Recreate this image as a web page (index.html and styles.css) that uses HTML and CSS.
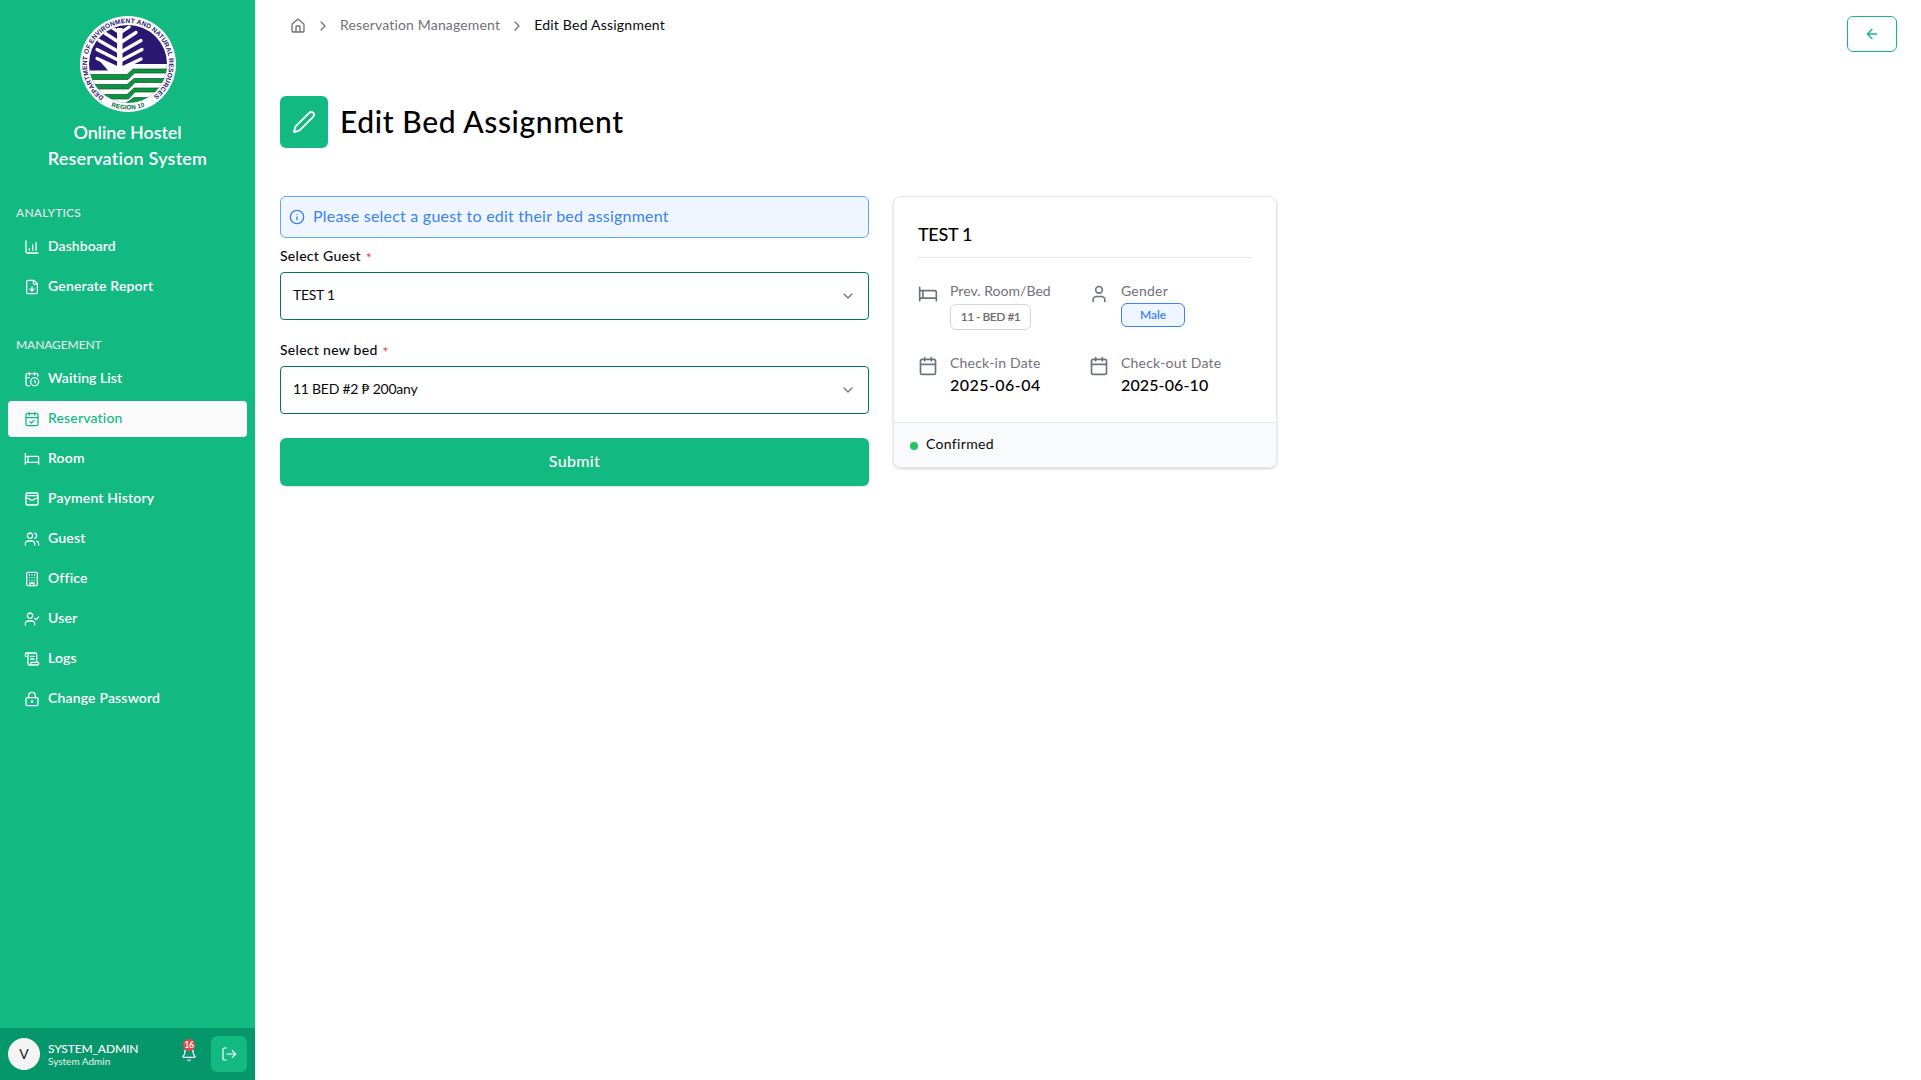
FILE: index.html
```html
<!DOCTYPE html>
<html lang="en">
<head>
<meta charset="utf-8">
<title>Edit Bed Assignment</title>
<link rel="stylesheet" href="styles.css">
</head>
<body>
<svg class="sprite" width="0" height="0" aria-hidden="true">
  <symbol id="bed" viewBox="0 0 24 24"><path d="M2 4v16M2 8h18a2 2 0 0 1 2 2v10M2 17h20M6 8v9"/></symbol>
  <symbol id="calendar" viewBox="0 0 24 24"><path d="M8 2v4M16 2v4M3 10h18"/><rect x="3" y="4" width="18" height="18" rx="2"/></symbol>
  <symbol id="chev-right" viewBox="0 0 24 24"><path d="m9 18 6-6-6-6"/></symbol>
  <symbol id="chev-down" viewBox="0 0 24 24"><path d="m6 9 6 6 6-6"/></symbol>
</svg>
<div class="app">
  <aside class="sidebar">
    <div class="brand">
      <svg class="logo" viewBox="0 0 96 96">
        <defs>
          <clipPath id="disc"><circle cx="48" cy="48" r="39"/></clipPath>
          <path id="arc-top" d="M23.900 81.200A41 41 0 1 1 72.100 81.200"/>
          <path id="arc-bottom" d="M22 85.300A45.500 45.500 0 0 0 74 85.300"/>
        </defs>
        <circle cx="48" cy="48" r="48" fill="#fff"/>
        <g clip-path="url(#disc)">
          <rect width="96" height="96" fill="#2a1772"/>
          <path d="M0 54.500H28L18 43Q30 48 37 52V12h5.500V52Q50 46 60.500 44L54 48H96V96H0Z" fill="#fff"/>
          <g fill="none" stroke="#fff" stroke-width="3.300">
            <path d="M24 16.500 40 27 56 16.500M19 24.500 40 36.500 61 24.500M17 33.500 40 45 62 33.500M17 42.500 40 53 61 43"/>
            <path d="M31 11 40 17 49 11"/>
          </g>
          <g fill="#05963f" stroke="#1d4a33" stroke-width=".7">
            <path d="M0 58.500H47L53 53H96V57H54.500L48 63.500H0Z"/>
            <path d="M0 68.500H47L54 62.500H96V66.500H55L48.500 73H0Z"/>
            <path d="M0 78.500H47L54 72H96V76H55L48.500 83H0Z"/>
            <path d="M44 88.500 54 81.500H96V96H44Z"/>
          </g>
        </g>
        <text class="seal-text"><textPath href="#arc-top" textLength="204" lengthAdjust="spacing">DEPARTMENT OF ENVIRONMENT AND NATURAL RESOURCES</textPath></text>
        <text class="seal-text seal-region"><textPath href="#arc-bottom" startOffset="50%" text-anchor="middle">REGION 10</textPath></text>
      </svg>
      <div class="brand-name"><span class="l1">Online Hostel</span><br>Reservation System</div>
    </div>
    <nav>
      <h2>ANALYTICS</h2>
      <a class="even"><svg viewBox="0 0 24 24"><path d="M13 17V9M18 17V5M3 3v16a2 2 0 0 0 2 2h16M8 17v-3"/></svg><span>Dashboard</span></a>
      <a><svg viewBox="0 0 24 24"><path d="M15 2H6a2 2 0 0 0-2 2v16a2 2 0 0 0 2 2h12a2 2 0 0 0 2-2V7ZM14 2v4a2 2 0 0 0 2 2h4M12 18v-6M9 15l3 3 3-3"/></svg><span>Generate Report</span></a>
      <h2 class="second">MANAGEMENT</h2>
      <a class="even"><svg viewBox="0 0 24 24"><path d="M21 7.500V6a2 2 0 0 0-2-2H5a2 2 0 0 0-2 2v14a2 2 0 0 0 2 2h3.500M16 2v4M8 2v4M3 10h5M17.500 17.500 16 16.300V14"/><circle cx="16" cy="16" r="6"/></svg><span>Waiting List</span></a>
      <a class="active"><svg viewBox="0 0 24 24"><path d="M8 2v4M16 2v4M3 10h18M9 16l2 2 4-4"/><rect x="3" y="4" width="18" height="18" rx="2"/></svg><span>Reservation</span></a>
      <a><svg><use href="#bed"/></svg><span>Room</span></a>
      <a><svg viewBox="0 0 24 24"><rect x="3" y="3" width="18" height="18" rx="2"/><path d="M3 9a2 2 0 0 1 2-2h14a2 2 0 0 1 2 2M3 11h3c.8 0 1.600.3 2.100.9l1.100.9c1.600 1.600 4.100 1.600 5.700 0l1.100-.9c.5-.5 1.300-.9 2.100-.9H21"/></svg><span>Payment History</span></a>
      <a><svg viewBox="0 0 24 24"><path d="M16 21v-2a4 4 0 0 0-4-4H6a4 4 0 0 0-4 4v2M22 21v-2a4 4 0 0 0-3-3.870M16 3.130a4 4 0 0 1 0 7.750"/><circle cx="9" cy="7" r="4"/></svg><span>Guest</span></a>
      <a><svg viewBox="0 0 24 24"><rect x="4" y="2" width="16" height="20" rx="2"/><path d="M9 22v-4h6v4M8 6h.01M16 6h.01M12 6h.01M12 10h.01M12 14h.01M16 10h.01M16 14h.01M8 10h.01M8 14h.01"/></svg><span>Office</span></a>
      <a><svg viewBox="0 0 24 24"><path d="m16 11 2 2 4-4M16 21v-2a4 4 0 0 0-4-4H6a4 4 0 0 0-4 4v2"/><circle cx="9" cy="7" r="4"/></svg><span>User</span></a>
      <a><svg viewBox="0 0 24 24"><path d="M15 12h-5M15 8h-5M19 17V5a2 2 0 0 0-2-2H4M8 21h12a2 2 0 0 0 2-2v-1a1 1 0 0 0-1-1H11a1 1 0 0 0-1 1v1a2 2 0 1 1-4 0V5a2 2 0 1 0-4 0v2a1 1 0 0 0 1 1h3"/></svg><span>Logs</span></a>
      <a><svg viewBox="0 0 24 24"><circle cx="12" cy="16" r="1"/><rect x="3" y="10" width="18" height="12" rx="2"/><path d="M7 10V7a5 5 0 0 1 10 0v3"/></svg><span>Change Password</span></a>
    </nav>
    <footer class="account">
      <div class="avatar">V</div>
      <div class="who"><div class="user">SYSTEM_ADMIN</div><div class="role">System Admin</div></div>
      <div class="bell">
        <svg viewBox="0 0 24 24"><path d="M10.268 21a2 2 0 0 0 3.464 0M3.262 15.326A1 1 0 0 0 4 17h16a1 1 0 0 0 .740-1.673C19.410 13.956 18 12.499 18 8A6 6 0 0 0 6 8c0 4.499-1.411 5.956-2.738 7.326"/></svg>
        <span class="count">16</span>
      </div>
      <button class="logout"><svg viewBox="0 0 24 24"><path d="M8 21H5a2 2 0 0 1-2-2V5a2 2 0 0 1 2-2h3M17 17l5-5-5-5M22 12H9"/></svg></button>
    </footer>
  </aside>
  <main>
    <div class="topbar">
      <div class="crumbs">
        <svg class="home" viewBox="0 0 24 24"><path d="M15 21v-8a1 1 0 0 0-1-1h-4a1 1 0 0 0-1 1v8M3 10a2 2 0 0 1 .709-1.528l7-5.999a2 2 0 0 1 2.582 0l7 5.999A2 2 0 0 1 21 10v9a2 2 0 0 1-2 2H5a2 2 0 0 1-2-2z"/></svg>
        <svg class="sep"><use href="#chev-right"/></svg>
        <span>Reservation Management</span>
        <svg class="sep"><use href="#chev-right"/></svg>
        <span class="current">Edit Bed Assignment</span>
      </div>
      <button class="back"><svg viewBox="0 0 24 24"><path d="m12 19-7-7 7-7M19 12H5"/></svg></button>
    </div>
    <header class="title">
      <div class="title-icon"><svg viewBox="0 0 24 24"><path d="M21.174 6.812a1 1 0 0 0-3.986-3.987L3.842 16.174a2 2 0 0 0-.5.830l-1.321 4.352a.5.5 0 0 0 .623.622l4.353-1.320a2 2 0 0 0 .830-.497z"/></svg></div>
      <h1>Edit Bed Assignment</h1>
    </header>
    <div class="columns">
      <form>
        <div class="alert"><svg viewBox="0 0 24 24"><circle cx="12" cy="12" r="10"/><path d="M12 16v-4M12 8h.01"/></svg><span>Please select a guest to edit their bed assignment</span></div>
        <label>Select Guest <i>*</i></label>
        <div class="select"><span class="tight">TEST 1</span><svg><use href="#chev-down"/></svg></div>
        <label class="later">Select new bed <i>*</i></label>
        <div class="select"><span class="tighter">11 BED #2 ₱ 200any</span><svg><use href="#chev-down"/></svg></div>
        <button class="submit" type="button">Submit</button>
      </form>
      <section class="card">
        <div class="card-body">
          <h3>TEST 1</h3>
          <div class="facts">
            <div class="fact"><svg><use href="#bed"/></svg><div><div class="k flat">Prev. Room/Bed</div><span class="tag">11 - BED #1</span></div></div>
            <div class="fact"><svg viewBox="0 0 24 24"><path d="M19 21v-2a4 4 0 0 0-4-4H9a4 4 0 0 0-4 4v2"/><circle cx="12" cy="7" r="4"/></svg><div><div class="k">Gender</div><span class="tag male">Male</span></div></div>
            <div class="fact"><svg><use href="#calendar"/></svg><div><div class="k">Check-in Date</div><div class="v">2025-06-04</div></div></div>
            <div class="fact"><svg><use href="#calendar"/></svg><div><div class="k">Check-out Date</div><div class="v narrow">2025-06-10</div></div></div>
          </div>
        </div>
        <div class="status"><span class="dot"></span><span>Confirmed</span></div>
      </section>
    </div>
  </main>
</div>
</body>
</html>
```
FILE: styles.css
```css
* { box-sizing: border-box; margin: 0; padding: 0; }
body { font: 400 14px/20px Lato, "Noto Sans", sans-serif; letter-spacing: .17px; color: #09090b; background: #fff; }
svg { fill: none; stroke: currentColor; stroke-width: 2; stroke-linecap: round; stroke-linejoin: round; flex: none; }
button { font: inherit; letter-spacing: inherit; border: 0; }
.sprite { position: absolute; }
.app { display: flex; height: 1080px; }

.sidebar { width: 255px; background: #12b981; color: #fff; display: flex; flex-direction: column; }
.brand { display: flex; flex-direction: column; align-items: center; padding-top: 16px; }
.logo { width: 96px; height: 96px; stroke: none; margin-left: 1px; }
.brand-name { margin-top: 7px; font-size: 18px; line-height: 26px; font-weight: 600; text-align: center; letter-spacing: .2px; }
.brand-name .l1 { letter-spacing: -.1px; }
.seal-text { font: 700 6.600px "Liberation Sans", Arial, sans-serif; fill: #2a1772; letter-spacing: 0; }
.seal-region { font-size: 6.300px; fill: #0b6b3a; letter-spacing: .1px; }

nav { flex: 1; padding: 28px 8px 0; }
nav h2 { font-size: 12px; line-height: 16px; font-weight: 500; color: #e5e7eb; padding: 0 8px; margin: 6px 0 8px; letter-spacing: .2px; }
nav h2.second { margin-top: 32px; letter-spacing: -.1px; }
nav a { display: flex; align-items: center; gap: 8px; height: 36px; margin-bottom: 4px; padding: 0 16px; border-radius: 4px; font-weight: 600; }
nav a.even { letter-spacing: .06px; }
nav a svg { width: 16px; height: 16px; stroke-width: 1.900; }
nav a span { margin-top: -2px; }
nav a.active { background: #fafafa; color: #12b981; font-weight: 500; }

.account { display: flex; align-items: center; height: 52px; padding: 0 8px; background: #059669; }
.avatar { width: 32px; height: 32px; border-radius: 50%; background: #f4f4f5; color: #18181b; text-align: center; line-height: 31px; }
.who { width: 133px; padding: 1px 0 0 8px; }
.user { font-size: 12px; line-height: 14px; font-weight: 500; letter-spacing: -.15px; }
.role { font-size: 10px; line-height: 10px; padding-bottom: 2px; letter-spacing: 0; color: #e5f5ee; }
.bell { position: relative; width: 16px; height: 16px; margin-left: 8px; }
.bell svg { display: block; width: 16px; height: 16px; }
.count { position: absolute; left: 2px; top: -7px; width: 12px; height: 12px; border-radius: 50%; background: #ef4444; font-size: 9px; line-height: 12px; text-align: center; letter-spacing: -.5px; font-weight: 600; }
.logout { margin-left: auto; width: 36px; height: 36px; border-radius: 6px; background: #12b981; color: #fff; display: grid; place-items: center; }
.logout svg { width: 16px; height: 16px; stroke-width: 1.800; }

main { flex: 1; padding: 16px 24px 0 25px; }
.topbar { display: flex; justify-content: space-between; align-items: flex-start; height: 80px; }
.crumbs { display: flex; align-items: center; height: 20px; margin: 0 0 0 10px; color: #71717a; }
.crumbs span { margin-top: -3px; letter-spacing: .16px; }
.home { width: 16px; height: 16px; margin-right: 9px; }
.sep { width: 16px; height: 16px; margin-right: 9px; stroke-width: 1.800; }
.crumbs span + .sep { margin-left: 9px; }
.crumbs .current { color: #09090b; letter-spacing: .22px; }
.back { width: 50px; height: 36px; border: 1px solid #12b981; border-radius: 6px; background: #fff; color: #12b981; display: grid; place-items: center; }
.back svg { width: 16px; height: 16px; }

.title { display: flex; align-items: center; gap: 12px; height: 52px; }
.title-icon { width: 48px; height: 52px; border-radius: 6px; background: #12b981; color: #fff; display: grid; place-items: center; }
.title-icon svg { width: 24px; height: 24px; stroke-width: 1.900; }
h1 { margin-top: -3px; font-size: 30px; line-height: 36px; font-weight: 500; letter-spacing: .6px; color: #000; }

.columns { display: flex; align-items: flex-start; gap: 24px; margin-top: 48px; }
form { width: 589px; }
.alert { display: flex; align-items: center; gap: 8px; height: 42px; padding: 0 8px; border: 1px solid #60a5fa; border-radius: 6px; background: #eff6ff; color: #3b82f6; font-size: 16px; letter-spacing: .22px; }
.alert svg { width: 16px; height: 16px; }
.alert span { margin-top: -2px; }
label { display: block; margin: 8px 0 6px; font-weight: 500; letter-spacing: .28px; }
label.later { margin-top: 20px; }
label i { font-style: normal; color: #ef4444; margin-left: 1px; position: relative; top: 2px; }
.select { display: flex; align-items: center; justify-content: space-between; height: 48px; padding: 0 12px; border: 1px solid #047857; border-radius: 4px; }
.select span { margin-top: -2px; }
.select svg { width: 16px; height: 16px; color: #71717a; stroke-width: 1.800; }
.tight { letter-spacing: -.3px; }
.tighter { letter-spacing: -.25px; }
.submit { display: block; width: 100%; height: 48px; margin-top: 24px; padding-bottom: 2px; border-radius: 6px; background: #12b981; color: #fff; font-size: 16px; font-weight: 500; letter-spacing: .35px; box-shadow: 0 1px 2px #0002; }

.card { width: 384px; height: 272px; border: 1px solid #e5e7eb; border-radius: 8px; overflow: hidden; box-shadow: 0 1px 3px #0000001a, 0 1px 2px #0000001a; }
.card-body { height: 225px; padding: 24px 24px 0; }
h3 { height: 37px; border-bottom: 1px solid #e5e7eb; font-size: 18px; line-height: 26px; font-weight: 500; letter-spacing: -.3px; color: #000; }
.facts { display: grid; grid-template-columns: 171px 1fr; grid-template-rows: 72px auto; padding-top: 24px; }
.fact { display: flex; gap: 12px; }
.fact svg { width: 20px; height: 20px; margin-top: 2px; color: #6b7280; }
.k { margin-top: -1px; color: #71717a; letter-spacing: .22px; }
.k.flat { letter-spacing: .04px; }
.v { font-size: 16px; line-height: 24px; font-weight: 500; letter-spacing: .45px; color: #000; }
.v.narrow { letter-spacing: .12px; }
.tag { display: flex; align-items: center; justify-content: center; width: 81px; height: 26px; margin-top: 3px; padding-bottom: 1px; border: 1px solid #d4d4d8; border-radius: 6px; font-size: 12px; font-weight: 600; letter-spacing: -.5px; color: #6b6b70; }
.tag.male { width: 64px; height: 24px; margin-top: 2px; border-color: #3b82f6; background: #eff6ff; color: #3b82f6; letter-spacing: -.1px; }
.status { display: flex; align-items: center; gap: 8px; height: 46px; padding: 0 16px; border-top: 1px solid #e5e7eb; background: #f9fafb; letter-spacing: .32px; }
.status span + span { margin-top: -3px; }
.dot { width: 8px; height: 8px; border-radius: 50%; background: #22c55e; }
```
